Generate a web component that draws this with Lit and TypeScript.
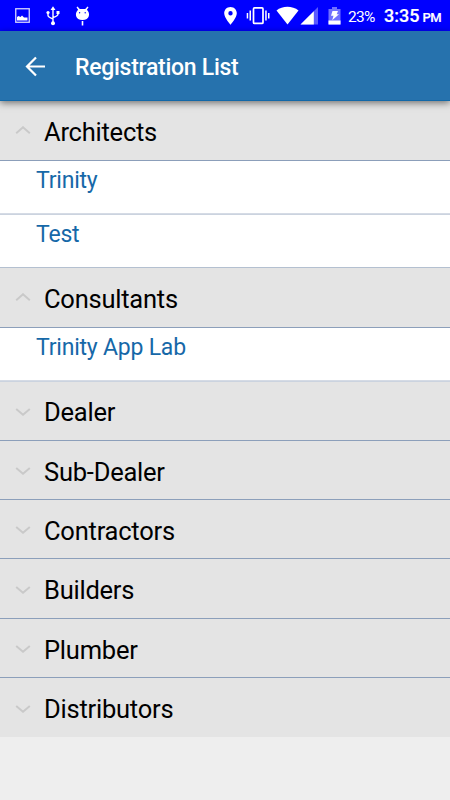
import { LitElement, html, css, svg } from "lit";
import { customElement, property } from "lit/decorators.js";

@customElement("status-bar")
class StatusBar extends LitElement {
  static styles = css`
    :host { display: flex; align-items: center; height: 31px; background: #0000ff; color: #fff; }
    svg { display: block; flex: none; }
    .left { width: 96px; }
    .right { margin-left: 123px; width: 125px; }
    .battery { font-size: 15.5px; width: 36px; margin-left: 4px; padding-top: 2px; white-space: nowrap; letter-spacing: -0.7px; }
    .clock { font-size: 18px; line-height: 22px; font-weight: 500; white-space: nowrap; padding-top: 2px; letter-spacing: 0; -webkit-text-stroke: 0.2px #fff; }
    .clock small { font-size: 13px; font-weight: 500; letter-spacing: -0.6px; margin-left: 3px; }
  `;
  render() {
    return html`
      <svg class="left" width="96" height="31" viewBox="0 0 96 31" fill="#fff">
        <rect x="15.75" y="8.75" width="13.5" height="13.5" fill="none" stroke="#d5d5ff" stroke-width="1.3" />
        <path d="M17 20.500v-3.500l1.500-1 2 1 1.500-1.500 2 2h3.500v3z" />
        <path d="M53 9v14M48 12v3.500q0 1.500 5 3.500M58 12v2q0 2-5 3.500" stroke="#fff" stroke-width="1.400" fill="none" />
        <path d="M53 6.200l-2.500 3.800h5zM56.500 11h3v3h-3z" />
        <circle cx="48" cy="12.500" r="1.600" /><circle cx="53" cy="23.200" r="2" />
        <path d="M76.500 7.200l1-.8 2.300 2.500h5.400l2.300-2.500 1 .8-1.600 2.500c3.800 3.300 2.700 10.300-4.400 10.300s-8.200-7-4.400-10.300z" />
        <circle cx="79.600" cy="12.700" r=".7" fill="#00f" /><circle cx="85.200" cy="12.700" r=".7" fill="#00f" />
        <path d="M81.700 21h1.600v4.500h-1.600z" />
      </svg>
      <svg class="right" width="125" height="31" viewBox="219 0 125 31" fill="#fff">
        <path fill-rule="evenodd" d="M230.500 7c-3.800 0-6.300 2.900-6.300 6.300 0 4.500 6.300 11.500 6.300 11.500s6.300-7 6.300-11.500c0-3.400-2.500-6.300-6.300-6.300zm0 4a2.200 2.200 0 1 1 0 4.400 2.200 2.200 0 0 1 0-4.400z" />
        <rect x="253.500" y="7.900" width="9.500" height="15.500" rx="1" fill="none" stroke="#fff" stroke-width="1.700" />
        <path d="M249.500 10.500h1.500v10h-1.500zM246.700 13h1.500v5.500h-1.500zM265.200 10.500h1.500v10h-1.500zM268 13h1.500v5.500H268z" />
        <path d="M276.500 10.500c6-5 15.800-5 22 0L287.500 24.500z" />
        <path d="M318 7v17.500h-17.500z" fill="#5a5aff" />
        <path d="M313.800 11.200v13.300h-13.300z" />
        <path d="M328.500 9h3.500V7h5v2h3.500v15.500h-12z" fill="#7070ff" />
        <path d="M328.500 20.500h12v4h-12z" />
        <path d="M332.500 11h5.500l-1.300 3.200h2.300l-6.800 6 1.300-4.500h-2.500z" />
      </svg>
      <span class="battery">23%</span>
      <span class="clock">3:35<small>PM</small></span>
    `;
  }
}

@customElement("app-header")
class AppHeader extends LitElement {
  static styles = css`
    :host { display: flex; align-items: center; height: 70px; box-sizing: border-box; background: #2672ad; border-bottom: 1px solid #1268a8; color: #fff; padding-left: 24px; box-shadow: 0 2px 7px rgba(0,0,0,.5); position: relative; z-index: 1; }
    svg { display: block; margin-right: 29px; }
    h1 { margin: 4px 0 0; font-size: 23px; font-weight: 500; line-height: 28px; letter-spacing: -0.28px; white-space: nowrap; }
  `;
  render() {
    return html`
      <svg width="22" height="22" viewBox="0 0 22 22" fill="none" stroke="#fff" stroke-width="2.200">
        <path d="M21 11.500H3M12 2.500l-9 9 9 9" />
      </svg>
      <h1>Registration List</h1>
    `;
  }
}

@customElement("group-row")
class GroupRow extends LitElement {
  @property() label = "";
  @property({ type: Boolean }) open = false;
  static styles = css`
    :host { display: flex; align-items: center; background: #e4e4e4; color: #000; padding-left: 15px; }
    svg { display: block; width: 16px; height: 10px; margin: 0 13px 0 0; fill: none; stroke: #c9c9c9; stroke-width: 1.900; }
    span { font-size: 25.500px; line-height: 30px; padding-top: 3px; letter-spacing: -0.230px; white-space: nowrap; }
  `;
  render() {
    return html`
      <svg viewBox="0 0 16 10">${this.open
        ? svg`<path d="M1.200 7.200L8 1.200l6.800 6" />`
        : svg`<path d="M1.200 3L8 8.800l6.800-5.800" />`}</svg>
      <span>${this.label}</span>
    `;
  }
}

interface Group { name: string; members: string[]; }

const groups: Group[] = [
  { name: "Architects", members: ["Trinity", "Test"] },
  { name: "Consultants", members: ["Trinity App Lab"] },
  { name: "Dealer", members: [] },
  { name: "Sub-Dealer", members: [] },
  { name: "Contractors", members: [] },
  { name: "Builders", members: [] },
  { name: "Plumber", members: [] },
  { name: "Distributors", members: [] },
];

@customElement("app-root")
class AppRoot extends LitElement {
  static styles = css`
    :host { display: block; width: 450px; height: 800px; overflow: hidden; background: #eee; font-family: Roboto, sans-serif; }
    .list { display: grid; grid-template-rows: 60px 53px 54px 60px 53px 60px 59px 59px 60px 59px 59px; }
    .row { border-bottom: 1px solid #8c9fba; }
    .row:last-child { border-bottom: 0; }
    .member { display: flex; align-items: center; background: #fff; color: #1668a8; font-size: 23px; line-height: 28px; padding: 0 0 12px 36px; letter-spacing: -0.210px; border-bottom-color: #b4c0d0; }
    .first { position: relative; border-bottom-color: #d5dbe5; box-shadow: 0 1px 0 #cbd3df; }
  `;
  render() {
    return html`
      <status-bar></status-bar>
      <app-header></app-header>
      <div class="list">
        ${groups.map(g => html`
          <group-row class="row" .label=${g.name} .open=${g.members.length > 0}></group-row>
          ${g.members.map((m, i) => html`<div class="row member ${i === 0 ? "first" : ""}">${m}</div>`)}
        `)}
      </div>
    `;
  }
}
